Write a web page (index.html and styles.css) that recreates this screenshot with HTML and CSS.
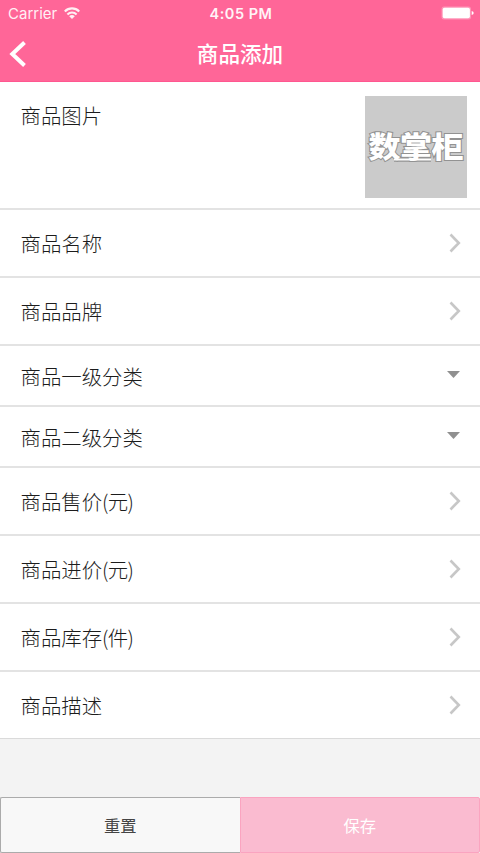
FILE: index.html
```html
<!DOCTYPE html>
<html lang="zh-CN">
<head>
<meta charset="utf-8">
<title>商品添加</title>
<link rel="stylesheet" href="styles.css">
</head>
<body>
<div class="screen">
  <header class="header">
    <div class="status">
      <div class="carrier">
        <span>Carrier</span>
        <svg class="wifi" width="16" height="12" viewBox="0 0 16 12" fill="none" stroke="#fff" stroke-width="2.1"><path d="M.8 4.4a10.2 10.2 0 0 1 14.4 0"/><path d="M3.4 7.4a6.5 6.5 0 0 1 9.2 0"/><path d="M8 12 5.2 9.2a3.9 3.9 0 0 1 5.6 0Z" fill="#fff" stroke="none"/></svg>
      </div>
      <span class="time">4:05 PM</span>
      <svg class="battery" width="33" height="14" viewBox="0 0 33 14"><rect x=".5" y=".5" width="29.5" height="13" rx="2.5" fill="#fff" fill-opacity=".3"/><rect x="1.7" y="1.7" width="27.2" height="10.6" rx="1.8" fill="#fff"/><path d="M30.7 5v4q2-.5 2-2t-2-2Z" fill="#fff"/></svg>
    </div>
    <nav class="nav">
      <svg class="back" width="18" height="28" viewBox="0 0 18 28" fill="none" stroke="#fff" stroke-width="4"><path d="M15.5 2.5 3.3 14l12.2 11.5"/></svg>
      <h1 class="title">商品添加</h1>
    </nav>
  </header>
  <main class="list">
    <div class="row photo"><span>商品图片</span>
      <svg class="thumb" width="102" height="102" viewBox="0 0 102 102"><rect width="102" height="102" fill="#cbcbcb"/><path class="edge" d="M29 63.5h37"/><text class="brand" transform="translate(51 62) scale(1 .91)" text-anchor="middle" textLength="95">数掌柜</text><path class="core" d="M29 63.5h37"/></svg>
    </div>
    <div class="row"><span>商品名称</span><svg class="chevron" viewBox="0 0 12 20"><path d="m1.5 1.5 8.3 8.5-8.3 8.5"/></svg></div>
    <div class="row"><span>商品品牌</span><svg class="chevron" viewBox="0 0 12 20"><path d="m1.5 1.5 8.3 8.5-8.3 8.5"/></svg></div>
    <div class="row select"><span>商品一级分类</span><i class="caret"></i></div>
    <div class="row select"><span>商品二级分类</span><i class="caret"></i></div>
    <div class="row"><span>商品售价<span class="unit">(元)</span></span><svg class="chevron" viewBox="0 0 12 20"><path d="m1.5 1.5 8.3 8.5-8.3 8.5"/></svg></div>
    <div class="row"><span>商品进价<span class="unit">(元)</span></span><svg class="chevron" viewBox="0 0 12 20"><path d="m1.5 1.5 8.3 8.5-8.3 8.5"/></svg></div>
    <div class="row"><span>商品库存<span class="unit">(件)</span></span><svg class="chevron" viewBox="0 0 12 20"><path d="m1.5 1.5 8.3 8.5-8.3 8.5"/></svg></div>
    <div class="row last"><span>商品描述</span><svg class="chevron" viewBox="0 0 12 20"><path d="m1.5 1.5 8.3 8.5-8.3 8.5"/></svg></div>
  </main>
  <footer class="actions">
    <button class="btn reset">重置</button>
    <button class="btn save">保存</button>
  </footer>
</div>
</body>
</html>
```
FILE: styles.css
```css
* { box-sizing: border-box; }
body { margin: 0; font-family: "Noto Sans CJK SC", sans-serif; }
.screen { width: 480px; height: 853px; display: flex; flex-direction: column; background: #f3f3f3; overflow: hidden; }
.header { height: 82px; background: #ff6698; border-bottom: 1px solid #ff5790; color: #fff; }
.status { height: 26px; display: grid; grid-template-columns: 1fr auto 1fr; align-items: center; padding: 0 6px 0 8px; font-family: Inter, sans-serif; font-size: 15px; }
.carrier { display: flex; align-items: center; gap: 7px; opacity: .9; }
.time { font-weight: 600; font-size: 14.5px; letter-spacing: .5px; opacity: .93; }
.battery { justify-self: end; }
.nav { height: 53px; display: grid; grid-template-columns: 40px 1fr 40px; align-items: center; }
.back { margin: 2px 0 0 9px; }
.title { margin: 0; text-align: center; font-size: 21.6px; font-weight: 500; line-height: 30px; }
.row { height: 68px; display: flex; align-items: center; justify-content: space-between; padding: 0 19px 1px 20.5px; background: #fff; border-bottom: 2px solid #e3e3e3; font-size: 20.4px; font-weight: 300; line-height: 30px; color: #1c1c1c; }
.photo { height: 128px; align-items: flex-start; padding: 14px 13px 0 20.5px; }
.photo > span { margin-top: 4px; }
.unit { letter-spacing: -.7px; }
.brand { font-size: 32px; font-weight: 900; fill: #fff; stroke: #929292; stroke-width: 2.2px; paint-order: stroke; }
.edge { fill: none; stroke: #929292; stroke-width: 4.4; }
.core { fill: none; stroke: #fff; stroke-width: 2.2; }
.chevron { width: 12px; height: 20px; margin-top: 1px; fill: none; stroke: #c7c7c7; stroke-width: 2.6; }
.select { height: 61px; padding-bottom: 0; }
.caret { width: 13px; height: 7px; margin: 0 1px 2px 0; background: #909090; clip-path: polygon(0 0, 100% 0, 50% 100%); }
.last { height: 67px; border-bottom: 1px solid #dadada; }
.actions { height: 56px; margin-top: auto; display: flex; }
.btn { flex: 1; padding: 0 0 1px; font: 400 16.3px "Noto Sans CJK SC", sans-serif; border: 1px solid; }
.reset { background: #f8f8f8; border-color: #ababab; border-radius: 2px 0 0 2px; border-right: 0; color: #444; }
.save { background: #fabbd0; border-color: #faa4c0; border-radius: 0 2px 2px 0; color: #fff; }
```
